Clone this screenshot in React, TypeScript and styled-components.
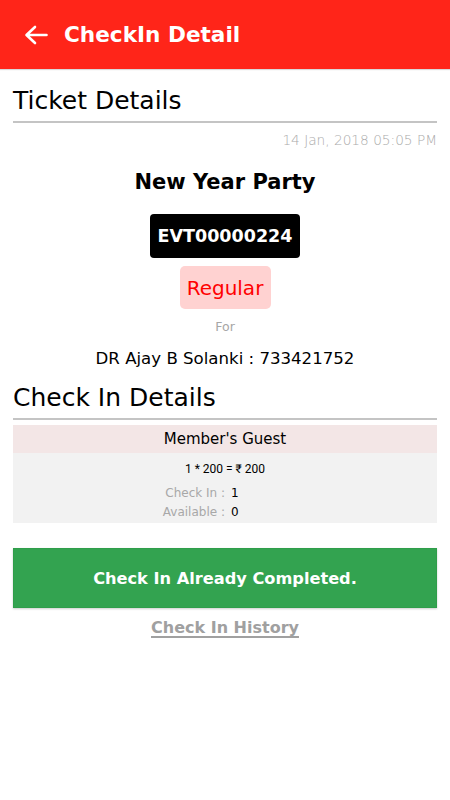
import React from "react";
import styled, { createGlobalStyle } from "styled-components";

const Global = createGlobalStyle`
  html, body { margin: 0; padding: 0; background: #fff; }
  body { font-family: "DejaVu Sans", "Noto Sans", sans-serif; color: #000; }
`;

const Page = styled.div`
  width: 450px;
  min-height: 800px;
  display: flex;
  flex-direction: column;
  background: #fff;
`;

const TopBar = styled.header`
  height: 69px;
  background: #ff2519;
  display: flex;
  align-items: center;
  padding-left: 24px;
  gap: 16px;
  box-sizing: border-box;
  box-shadow: 0 1px 1px rgba(0,0,0,0.15);
`;

const BarTitle = styled.h1`
  margin: 0;
  color: #fff;
  font-size: 21.6px;
  font-weight: 700;
`;

const Body = styled.main`
  padding: 0 13px;
  display: flex;
  flex-direction: column;
`;

const SectionTitle = styled.h2<{ $top: number }>`
  margin: ${(p) => p.$top}px 0 0;
  font-size: 25px;
  font-weight: 400;
  line-height: 34px;
  padding-bottom: 3px;
  border-bottom: 2px solid #c4c4c4;
`;

const DateText = styled.div`
  text-align: right;
  color: #ababab;
  font-size: 13.7px;
  font-weight: 300;
  margin-top: 7px;
  line-height: 20px;
`;

const EventName = styled.div`
  text-align: center;
  font-size: 21px;
  font-weight: 700;
  margin-top: 19px;
  line-height: 26px;
`;

const Center = styled.div`
  display: flex;
  flex-direction: column;
  align-items: center;
`;

const CodeBadge = styled.div`
  margin-top: 19px;
  background: #000;
  color: #fff;
  border-radius: 4px;
  height: 44px;
  width: 150px;
  display: flex;
  align-items: center;
  justify-content: center;
  font-size: 17.5px;
  font-weight: 700;
`;

const TypeBadge = styled.div`
  margin-top: 8px;
  background: #ffd2d1;
  color: #ff0000;
  border-radius: 5px;
  height: 43px;
  width: 91px;
  display: flex;
  align-items: center;
  justify-content: center;
  font-size: 20px;
`;

const ForText = styled.div`
  margin-top: 9px;
  color: #a6a6a6;
  font-size: 12.5px;
  line-height: 18px;
`;

const Holder = styled.div`
  margin-top: 11px;
  font-size: 16.6px;
  line-height: 24px;
`;

const Band = styled.div`
  margin-top: 5px;
  background: #f3e6e6;
  height: 28px;
  display: flex;
  align-items: center;
  justify-content: center;
  font-size: 15px;
`;

const InfoBlock = styled.div`
  background: #f2f2f2;
  padding: 8px 0 1px;
  display: flex;
  flex-direction: column;
  align-items: center;
`;

const Price = styled.div`
  font-family: Roboto, "Noto Sans", sans-serif;
  font-size: 12px;
  line-height: 16px;
  margin-bottom: 7px;
`;

const StatRow = styled.div`
  display: grid;
  grid-template-columns: 218px 1fr;
  width: 100%;
  font-size: 12px;
  line-height: 19px;
`;

const StatLabel = styled.span`
  color: #a8a8a8;
  text-align: right;
  padding-right: 6px;
`;

const StatValue = styled.span`
  color: #000;
`;

const DoneButton = styled.div`
  margin-top: 25px;
  height: 60px;
  background: #33a350;
  border: 1px solid #2f9e4a;
  box-sizing: border-box;
  color: #fff;
  font-size: 16.2px;
  font-weight: 700;
  display: flex;
  align-items: center;
  justify-content: center;
  box-shadow: 0 1px 2px rgba(0,0,0,0.2);
`;

const HistoryLink = styled.a`
  margin-top: 8px;
  align-self: center;
  color: #a0a0a0;
  font-size: 16px;
  font-weight: 700;
  text-decoration: underline;
  text-decoration-thickness: 2px;
  text-underline-offset: 3px;
  line-height: 24px;
`;

const BackArrow = () => (
  <svg width="24" height="20" viewBox="0 0 24 20" fill="none">
    <path
      d="M22.5 10H3M11 2L2.5 10L11 18"
      stroke="#fff"
      strokeWidth="2.6"
      strokeLinecap="round"
      strokeLinejoin="round"
    />
  </svg>
);

export default function App() {
  return (
    <>
      <Global />
      <Page>
        <TopBar>
          <BackArrow />
          <BarTitle>CheckIn Detail</BarTitle>
        </TopBar>
        <Body>
          <SectionTitle $top={15}>Ticket Details</SectionTitle>
          <DateText>14 Jan, 2018 05:05 PM</DateText>
          <EventName>New Year Party</EventName>
          <Center>
            <CodeBadge>EVT00000224</CodeBadge>
            <TypeBadge>Regular</TypeBadge>
            <ForText>For</ForText>
            <Holder>DR Ajay B Solanki : 733421752</Holder>
          </Center>
          <SectionTitle $top={10}>Check In Details</SectionTitle>
          <Band>Member's Guest</Band>
          <InfoBlock>
            <Price>1 * 200 = ₹ 200</Price>
            <StatRow>
              <StatLabel>Check In :</StatLabel>
              <StatValue>1</StatValue>
            </StatRow>
            <StatRow>
              <StatLabel>Available :</StatLabel>
              <StatValue>0</StatValue>
            </StatRow>
          </InfoBlock>
          <DoneButton>Check In Already Completed.</DoneButton>
          <HistoryLink>Check In History</HistoryLink>
        </Body>
      </Page>
    </>
  );
}
